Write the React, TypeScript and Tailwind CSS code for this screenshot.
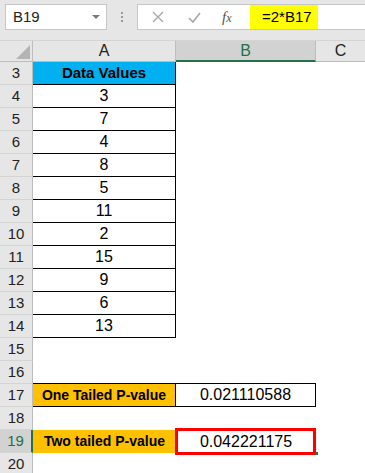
import type { ReactNode } from "react";

const FONT = { fontFamily: '"Liberation Sans", Arial, sans-serif' };

const DATA = [3, 7, 4, 8, 5, 11, 2, 15, 9, 6, 13];

function RowHead({ n, active }: { n: number; active?: boolean }) {
  return (
    <div
      className={`flex h-[23px] w-[33px] shrink-0 items-center justify-center border-b border-[#d4d4d4] text-[15px] ${
        active
          ? "border-r-2 border-r-[#217346] bg-[#d2d2d2] text-[#217346]"
          : "border-r border-r-[#bdbdbd] bg-[#e6e6e6] text-[#222]"
      }`}
    >
      {n}
    </div>
  );
}

function Row({ n, active, children }: { n: number; active?: boolean; children?: ReactNode }) {
  return (
    <div className="flex h-[23px]">
      <RowHead n={n} active={active} />
      {children}
    </div>
  );
}

export default function App() {
  return (
    <div className="h-[473px] w-[365px] overflow-hidden bg-white text-black" style={FONT}>
      {/* formula bar */}
      <div className="flex h-[40px] items-start bg-[#e6e6e6] pt-[4px]">
        <div className="ml-[5px] flex h-[26px] w-[102px] items-center justify-between border border-[#c6c6c6] bg-white pl-[7px] pr-[6px] text-[15px] text-[#222]">
          <span>B19</span>
          <svg width="8" height="5" viewBox="0 0 8 5">
            <path d="M0 0 L8 0 L4 4 Z" fill="#7a7a7a" />
          </svg>
        </div>
        <div className="flex h-[26px] w-[30px] flex-col items-center justify-center gap-[2px]">
          <span className="h-[2px] w-[2px] bg-[#9a9a9a]" />
          <span className="h-[2px] w-[2px] bg-[#9a9a9a]" />
          <span className="h-[2px] w-[2px] bg-[#9a9a9a]" />
        </div>
        <div className="flex h-[26px] flex-1 items-stretch border-y border-l border-[#c6c6c6] bg-white">
          <div className="flex w-[112px] items-center">
            <svg className="ml-[14px]" width="12" height="12" viewBox="0 0 12 12">
              <path d="M1 1 L11 11 M11 1 L1 11" stroke="#a6a6a6" strokeWidth="1.3" />
            </svg>
            <svg className="ml-[24px]" width="13" height="11" viewBox="0 0 13 11">
              <path d="M1 6 L5 10 L12 1" stroke="#a6a6a6" strokeWidth="1.6" fill="none" />
            </svg>
            <span
              className="ml-[21px] text-[15px] italic text-[#555]"
              style={{ fontFamily: '"Liberation Serif", serif' }}
            >
              f<span className="text-[12px]">x</span>
            </span>
          </div>
          <div className="flex w-[68px] items-center bg-[#ffff00] pl-[12px] text-[15px]">=2*B17</div>
        </div>
      </div>

      {/* column headers */}
      <div className="flex h-[22px] border-t border-[#d4d4d4] bg-[#e6e6e6] text-[16px]">
        <div className="relative w-[33px] shrink-0 border-r border-b border-[#bdbdbd]">
          <svg className="absolute bottom-[2px] right-[2px]" width="14" height="14" viewBox="0 0 14 14">
            <path d="M14 0 L14 14 L0 14 Z" fill="#b4b4b4" />
          </svg>
        </div>
        <div className="flex w-[143px] shrink-0 items-center justify-center border-r border-b border-[#bdbdbd] text-[#222]">
          A
        </div>
        <div className="flex w-[140px] shrink-0 items-center justify-center border-r border-[#bdbdbd] border-b-2 border-b-[#217346] bg-[#d2d2d2] text-[#217346]">
          B
        </div>
        <div className="flex flex-1 items-center justify-center border-b border-[#bdbdbd] text-[#222]">C</div>
      </div>

      {/* rows */}
      <Row n={3}>
        <div className="flex w-[143px] items-center justify-center border-r border-b border-black bg-[#00b0f0] text-[15px] font-bold">
          Data Values
        </div>
      </Row>
      {DATA.map((v, i) => (
        <Row key={i} n={i + 4}>
          <div className="flex w-[143px] items-center justify-center border-r border-b border-black text-[16px]">
            {v}
          </div>
        </Row>
      ))}
      <Row n={15} />
      <Row n={16}>
        <div className="w-[283px] border-b border-black" />
      </Row>
      <Row n={17}>
        <div className="flex w-[143px] items-center justify-center border-r border-b border-black bg-[#ffc000] text-[14px] font-bold">
          One Tailed P-value
        </div>
        <div className="flex w-[140px] items-center justify-center border-r border-b border-black text-[16px]">
          0.021110588
        </div>
      </Row>
      <Row n={18} />
      <Row n={19} active>
        <div className="flex w-[143px] items-center justify-center bg-[#ffc000] text-[14px] font-bold">
          Two tailed P-value
        </div>
        <div className="relative flex w-[140px] items-center justify-center text-[16px]">
          0.042221175
          <div className="absolute -left-[1px] -top-[2px] -bottom-[2px] right-0 border-[3px] border-[#ff0000]" />
          <div className="absolute -bottom-[2px] -right-[2px] h-[3px] w-[3px] bg-[#217346]" />
        </div>
      </Row>
      <Row n={20} />
    </div>
  );
}
